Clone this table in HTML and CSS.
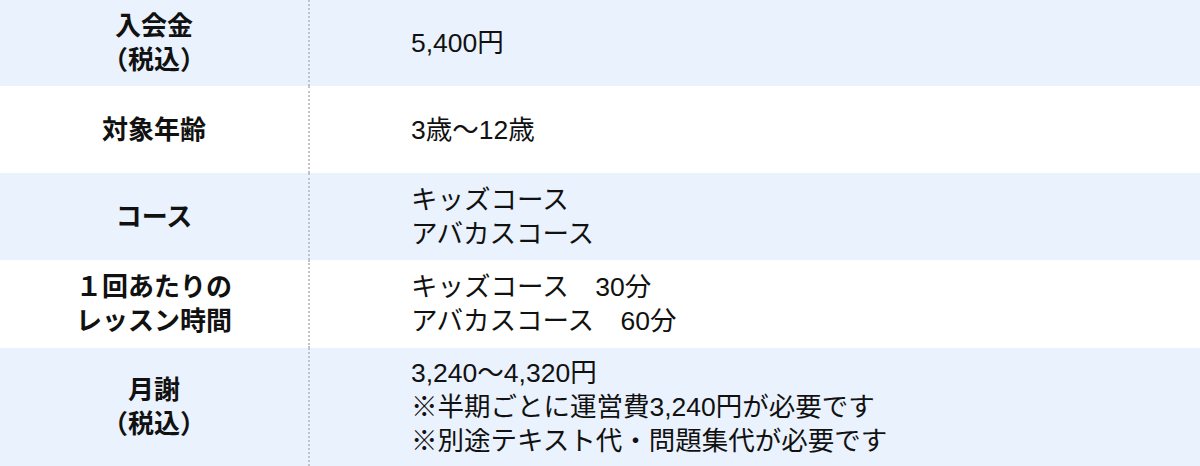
FILE: index.html
```html
<!DOCTYPE html>
<html lang="ja">
<head>
<meta charset="utf-8">
<link rel="stylesheet" href="styles.css">
</head>
<body>
<table class="info">
  <tr class="row row-a">
    <th class="label">入会金<br>（税込）</th>
    <td class="value">5,400円</td>
  </tr>
  <tr class="row row-b">
    <th class="label">対象年齢</th>
    <td class="value">3歳〜12歳</td>
  </tr>
  <tr class="row row-c">
    <th class="label">コース</th>
    <td class="value">キッズコース<br>アバカスコース</td>
  </tr>
  <tr class="row row-d">
    <th class="label">１回あたりの<br>レッスン時間</th>
    <td class="value">キッズコース　30分<br>アバカスコース　60分</td>
  </tr>
  <tr class="row row-e">
    <th class="label">月謝<br>（税込）</th>
    <td class="value">3,240〜4,320円<br>※半期ごとに運営費3,240円が必要です<br>※別途テキスト代・問題集代が必要です</td>
  </tr>
</table>
</body>
</html>
```
FILE: styles.css
```css
html, body {
  margin: 0;
  padding: 0;
  background: #ffffff;
}

.info {
  width: 1200px;
  border-collapse: collapse;
  font-family: "Liberation Sans", "Noto Sans CJK JP", sans-serif;
  font-size: 26px;
  line-height: 34px;
  color: #111111;
}

.row-a, .row-c, .row-e {
  background: #eaf2fd;
}

.row-b, .row-d {
  background: #ffffff;
}

.row-a { height: 86px; }
.row-b { height: 87px; }
.row-c { height: 87px; }
.row-d { height: 88px; }
.row-e { height: 118px; }

.label {
  width: 308px;
  padding: 0;
  text-align: center;
  vertical-align: middle;
  font-weight: bold;
  border-right: 2px dotted #c4c4c4;
}

.value {
  padding: 0 0 0 101px;
  text-align: left;
  vertical-align: middle;
  font-weight: normal;
  font-size: 26.5px;
}
```
